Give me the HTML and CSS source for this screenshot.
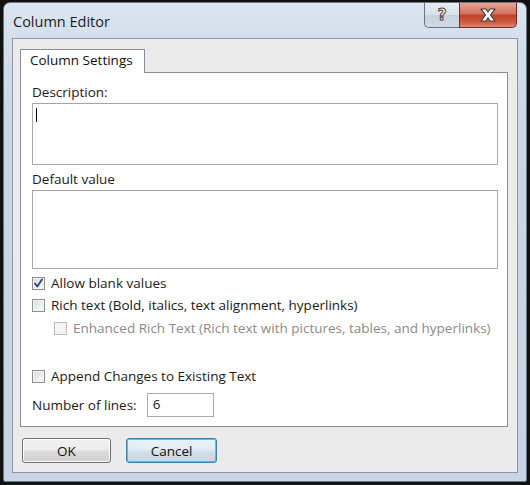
FILE: index.html
```html
<!DOCTYPE html>
<html>
<head>
<meta charset="utf-8">
<link rel="stylesheet" href="styles.css">
</head>
<body>
<div class="screen">
  <div class="window">
    <div class="titlebar">
      <span class="title">Column Editor</span>
      <div class="caption-btns">
        <div class="cbtn help"><span class="qmark">?</span></div>
        <div class="cbtn close">
          <svg width="18" height="14" viewBox="0 0 18 14">
            <path d="M2 1 H7 L9 4 L11 1 H16 L11.5 7 L16 13 H11 L9 10 L7 13 H2 L6.5 7 Z" fill="#fff" stroke="#3a3a3a" stroke-width="1.2" stroke-linejoin="round"/>
          </svg>
        </div>
      </div>
    </div>
    <div class="client">
      <div class="tabs">
        <div class="tab">Column Settings</div>
      </div>
      <div class="panel">
        <div class="label first">Description:</div>
        <div class="textbox desc"><span class="caret"></span></div>
        <div class="label second">Default value</div>
        <div class="textbox defval"></div>
        <div class="check-row r-allow">
          <span class="checkbox checked">
            <svg width="11" height="11" viewBox="0 0 11 11"><path d="M2 5.5 L4.3 8.5 L9 1.5" fill="none" stroke="#2c4a8a" stroke-width="2" stroke-linecap="round" stroke-linejoin="round"/></svg>
          </span>
          <span>Allow blank values</span>
        </div>
        <div class="check-row r-rich">
          <span class="checkbox"></span>
          <span>Rich text (Bold, italics, text alignment, hyperlinks)</span>
        </div>
        <div class="check-row r-enh disabled">
          <span class="checkbox"></span>
          <span>Enhanced Rich Text (Rich text with pictures, tables, and hyperlinks)</span>
        </div>
        <div class="check-row r-append">
          <span class="checkbox"></span>
          <span>Append Changes to Existing Text</span>
        </div>
        <div class="lines-row">
          <span>Number of lines:</span>
          <div class="numbox">6</div>
        </div>
      </div>
      <div class="buttons">
        <div class="btn">OK</div>
        <div class="btn default">Cancel</div>
      </div>
    </div>
  </div>
</div>
</body>
</html>
```

FILE: styles.css
```css
* { box-sizing: border-box; }
html, body { margin: 0; padding: 0; }
body {
  font-family: "Open Sans", "Noto Sans", sans-serif;
  font-size: 13.5px;
  color: #1a1a1a;
  background: #000;
}
.screen {
  width: 530px;
  height: 485px;
  background: #111;
  padding: 2px 3px 3px 3px;
}
.window {
  height: 480px;
  border-radius: 7px 7px 2px 2px;
  border: 1px solid #6b7686;
  background: linear-gradient(to bottom, #dde6f0 0px, #d3dfeb 36px, #c9d7e7 120px, #c6d4e5 100%);
  display: flex;
  flex-direction: column;
  padding: 0 8px 8px 8px;
}
.titlebar {
  height: 35px;
  display: flex;
  justify-content: space-between;
  align-items: flex-start;
  flex: none;
}
.title {
  font-size: 14.5px;
  color: #1c1c1c;
  padding-left: 1px;
  margin-top: 9px;
}
.caption-btns {
  display: flex;
  margin-right: 1px;
}
.cbtn {
  height: 25px;
  display: flex;
  align-items: center;
  justify-content: center;
  border: 1px solid #6a7381;
  border-top: none;
}
.help {
  width: 35px;
  border-radius: 0 0 0 5px;
  border-right: none;
  background: linear-gradient(to bottom, #e6ecf3 0%, #d7e0ea 50%, #c7d2de 51%, #cfd9e5 100%);
}
.qmark {
  font-family: "DejaVu Sans", sans-serif;
  font-weight: bold;
  font-size: 15px;
  color: #fff;
  -webkit-text-stroke: 1px #444;
  line-height: 1;
}
.close {
  width: 58px;
  border-radius: 0 0 5px 0;
  border-color: #7b2a22;
  background: linear-gradient(to bottom, #e7a496 0%, #d5705e 45%, #c4402a 52%, #cf5a3e 80%, #e08a6e 100%);
}
.client {
  flex: 1;
  background: #ebebeb;
  border: 1px solid #8d97a4;
  display: flex;
  flex-direction: column;
  padding: 10px 9px 0 7px;
}
.tabs {
  display: flex;
  height: 23px;
  position: relative;
  z-index: 1;
}
.tab {
  width: 125px;
  height: 24px;
  background: #fff;
  border: 1px solid #898c95;
  border-bottom: none;
  padding: 1px 0 0 9px;
  color: #111;
}
.panel {
  background: #fff;
  border: 1px solid #898c95;
  height: 355px;
  padding: 0 9px 0 11px;
  display: flex;
  flex-direction: column;
}
.label {
  height: 18px;
  line-height: 18px;
  margin-top: 5px;
}
.label.first { margin-top: 10px; }
.textbox {
  border: 1px solid #a9abb2;
  border-top-color: #a2a4ab;
  background: #fff;
  position: relative;
}
.desc { height: 62px; margin-top: 2px; }
.defval { height: 79px; margin-top: 2px; }
.caret {
  position: absolute;
  left: 3px;
  top: 4px;
  width: 1px;
  height: 14px;
  background: #000;
}
.check-row {
  display: flex;
  align-items: center;
  height: 18px;
  gap: 6px;
}
.r-allow { margin-top: 5px; }
.r-rich { margin-top: 4px; }
.r-enh { margin-top: 5px; padding-left: 22px; }
.r-append { margin-top: 30px; }
.disabled { color: #8a8a8a; }
.checkbox {
  width: 13px;
  height: 13px;
  border: 1px solid #8e8f8f;
  background: linear-gradient(135deg, #d8d8d8 0%, #efefef 60%, #fafafa 100%);
  box-shadow: inset 0 0 0 1px #f4f4f4;
  display: flex;
  align-items: center;
  justify-content: center;
  flex: none;
}
.disabled .checkbox {
  border-color: #bcbcbc;
  background: #f4f4f4;
  box-shadow: none;
}
.lines-row {
  display: flex;
  align-items: center;
  margin-top: 8px;
  height: 24px;
}
.numbox {
  margin-left: 10px;
  width: 67px;
  height: 24px;
  border: 1px solid #a9abb2;
  padding: 1px 0 0 5px;
}
.buttons {
  display: flex;
  gap: 15px;
  margin-top: 11px;
  padding-left: 2px;
}
.btn {
  width: 89px;
  height: 25px;
  border: 1px solid #707070;
  border-radius: 3px;
  background: linear-gradient(to bottom, #f2f2f2 0%, #ebebeb 48%, #dddddd 52%, #cfcfcf 100%);
  box-shadow: inset 0 0 0 1px #fbfbfb;
  display: flex;
  align-items: center;
  justify-content: center;
  color: #111;
}
.btn.default {
  width: 91px;
  border-color: #3c7fb1;
  box-shadow: inset 0 0 0 1px #48c5f1;
  background: linear-gradient(to bottom, #eaf3fa 0%, #e1ebf3 48%, #d3e0ea 52%, #c7d6e2 100%);
}
```
